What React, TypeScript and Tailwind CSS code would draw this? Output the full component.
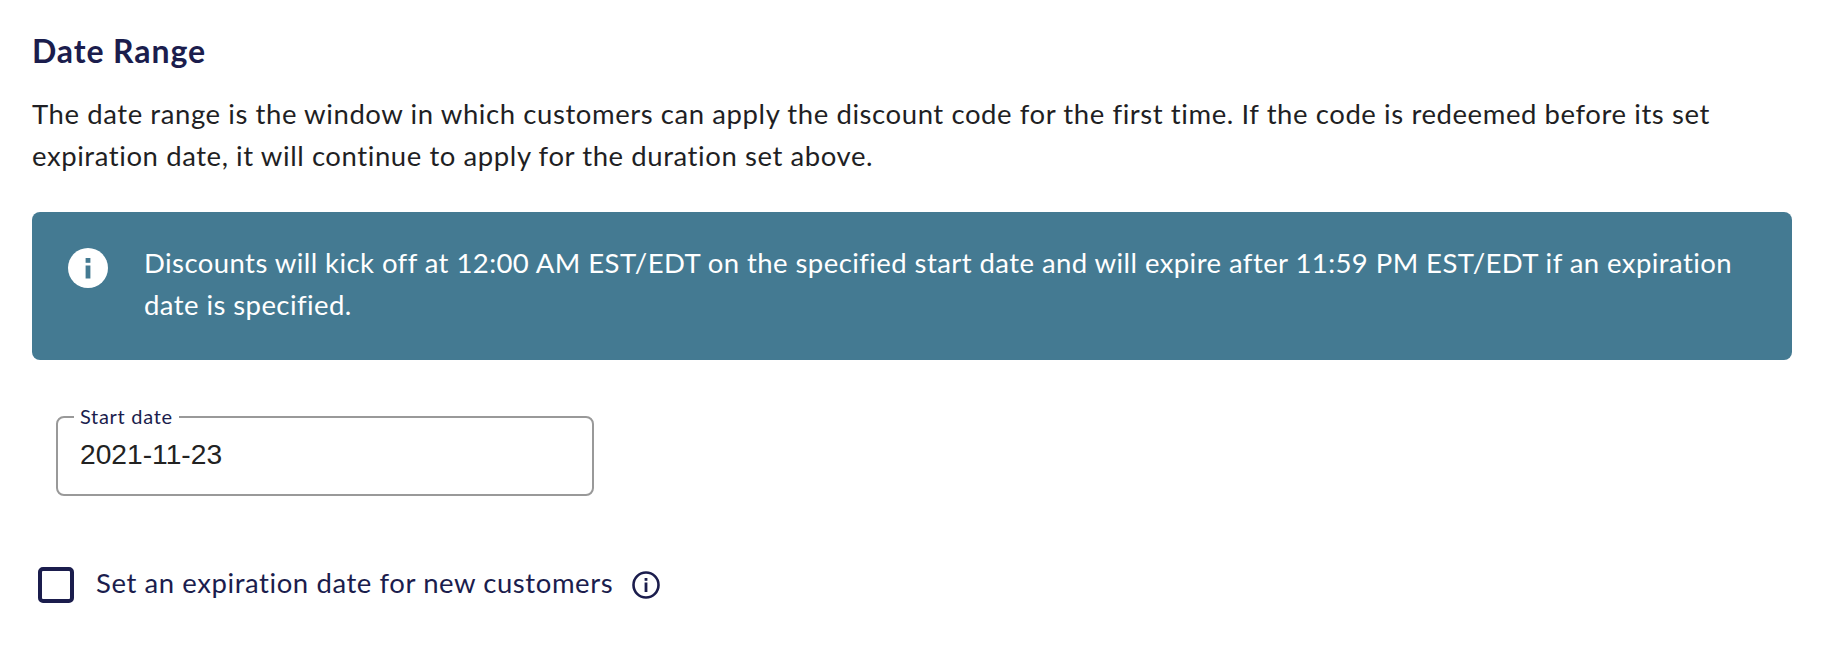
import React from "react";

const InfoSolid = () => (
  <svg className="h-10 w-10 shrink-0" viewBox="0 0 40 40">
    <circle cx="20" cy="20" r="20" fill="#fff" />
    <rect x="17.6" y="10" width="4.8" height="4.8" fill="#447a92" />
    <rect x="17.6" y="17.5" width="4.8" height="13" fill="#447a92" />
  </svg>
);

const InfoOutline = () => (
  <svg className="h-7 w-7 shrink-0" viewBox="0 0 28 28" fill="none">
    <circle cx="14" cy="14" r="12.5" stroke="#1b1d4d" strokeWidth="2.6" />
    <rect x="12.6" y="7" width="2.8" height="2.8" fill="#1b1d4d" />
    <rect x="12.6" y="11.5" width="2.8" height="9.5" fill="#1b1d4d" />
  </svg>
);

export default function App() {
  return (
    <div className="h-[646px] w-[1822px] overflow-hidden bg-white px-8 pt-[32px] font-['Lato',sans-serif]">
      <h2 className="text-[32px] leading-[38px] font-bold tracking-[0.9px] text-[#1b1d4d]">Date Range</h2>

      <p className="mt-[23px] text-[27.5px] leading-[42px] tracking-[0.58px] text-[#1f1f24]">
        The date range is the window in which customers can apply the discount code for the first time. If the code is redeemed before its set
        <br />
        expiration date, it will continue to apply for the duration set above.
      </p>

      <div className="mt-[35px] flex h-[148px] w-[1760px] gap-[36px] rounded-lg bg-[#447a92] pt-[30px] pl-[36px] text-white">
        <div className="pt-[6px]">
          <InfoSolid />
        </div>
        <p className="text-[27.5px] leading-[42px] tracking-[0.43px]">
          Discounts will kick off at 12:00 AM EST/EDT on the specified start date and will expire after 11:59 PM EST/EDT if an expiration
          <br />
          date is specified.
        </p>
      </div>

      <fieldset className="mt-[45px] ml-[24px] h-[91px] w-[538px] rounded-lg border-2 border-[#999999] pr-[14px] pl-[14px]">
        <legend className="ml-[2px] px-[6px] text-[20px] leading-[23px] tracking-[0.7px] text-[#1b1d4d]">Start date</legend>
        <div className="pt-[8px] pl-[8px] font-['Liberation_Sans',sans-serif] text-[28.2px] leading-[36px] text-[#222222]">2021-11-23</div>
      </fieldset>

      <div className="mt-[69px] ml-[6px] flex items-center">
        <span className="h-9 w-9 shrink-0 rounded-[5px] border-4 border-[#1b1d4d]" />
        <span className="ml-[22px] pb-[4px] text-[27.5px] leading-[36px] tracking-[0.58px] text-[#1b1d4d]">Set an expiration date for new customers</span>
        <span className="ml-[19px]">
          <InfoOutline />
        </span>
      </div>
    </div>
  );
}
